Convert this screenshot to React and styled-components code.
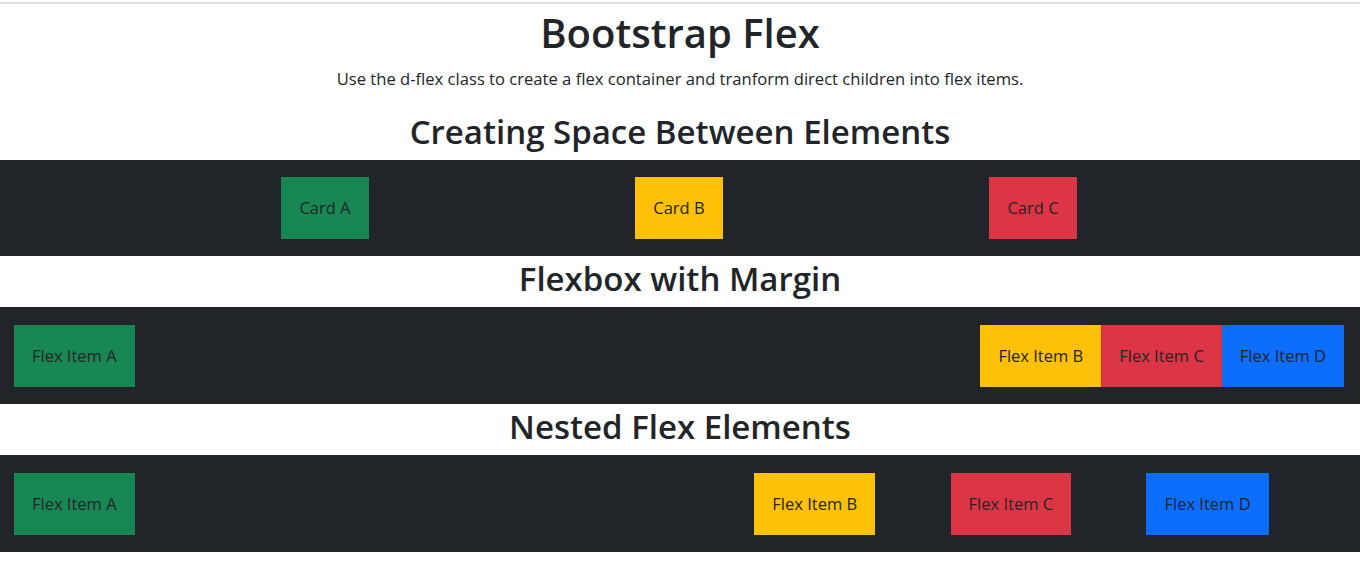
import styled, { createGlobalStyle } from "styled-components";

const GlobalStyle = createGlobalStyle`
  html, body {
    margin: 0;
    padding: 0;
    background: #fff;
  }
  body {
    font-family: "Open Sans", "Noto Sans", sans-serif;
    font-size: 16px;
    line-height: 1.5;
    color: #212529;
  }
`;

const Page = styled.div`
  border-top: 2px solid #dedede;
  margin-top: 2px;
  text-align: center;
`;

const Title = styled.h1`
  margin: 5px 0 0;
  font-size: 40px;
  font-weight: 600;
  line-height: 48px;
`;

const Lead = styled.p`
  margin: 10px 0 0;
  font-size: 16.6px;
  line-height: 24px;
`;

const Heading = styled.h2`
  margin: ${(p) => (p.$first ? "21.8px" : "4px")} 0 8.6px;
  font-size: 33px;
  font-weight: 600;
  line-height: 38.4px;
`;

const Band = styled.div`
  background: #212529;
  display: flex;
  align-items: center;
  padding: ${(p) => (p.$tight ? "17px" : "18px")} 16px 17px 14px;
`;

const Spread = styled.div`
  flex: 1;
  display: grid;
  grid-template-columns: repeat(3, 354px);
  justify-content: center;
  justify-items: center;
`;

const Group = styled.div`
  display: flex;
  margin-left: auto;
`;

const Nested = styled.div`
  display: flex;
  width: 50%;
  margin-left: auto;
  justify-content: space-evenly;
`;

const colors = {
  green: "#198754",
  yellow: "#ffc107",
  red: "#dc3545",
  blue: "#0d6efd",
};

const Item = styled.div`
  background: ${(p) => colors[p.$tone]};
  color: #212529;
  padding: 19px 18px;
  font-size: 16.5px;
  line-height: 24px;
  white-space: nowrap;
`;

export default function App() {
  return (
    <>
      <GlobalStyle />
      <Page>
        <Title>Bootstrap Flex</Title>
        <Lead>
          Use the d-flex class to create a flex container and tranform direct
          children into flex items.
        </Lead>

        <Heading $first>Creating Space Between Elements</Heading>
        <Band $tight>
          <Spread>
            <Item $tone="green">Card A</Item>
            <Item $tone="yellow">Card B</Item>
            <Item $tone="red">Card C</Item>
          </Spread>
        </Band>

        <Heading>Flexbox with Margin</Heading>
        <Band>
          <Item $tone="green">Flex Item A</Item>
          <Group>
            <Item $tone="yellow">Flex Item B</Item>
            <Item $tone="red">Flex Item C</Item>
            <Item $tone="blue">Flex Item D</Item>
          </Group>
        </Band>

        <Heading>Nested Flex Elements</Heading>
        <Band>
          <Item $tone="green">Flex Item A</Item>
          <Nested>
            <Item $tone="yellow">Flex Item B</Item>
            <Item $tone="red">Flex Item C</Item>
            <Item $tone="blue">Flex Item D</Item>
          </Nested>
        </Band>
      </Page>
    </>
  );
}
